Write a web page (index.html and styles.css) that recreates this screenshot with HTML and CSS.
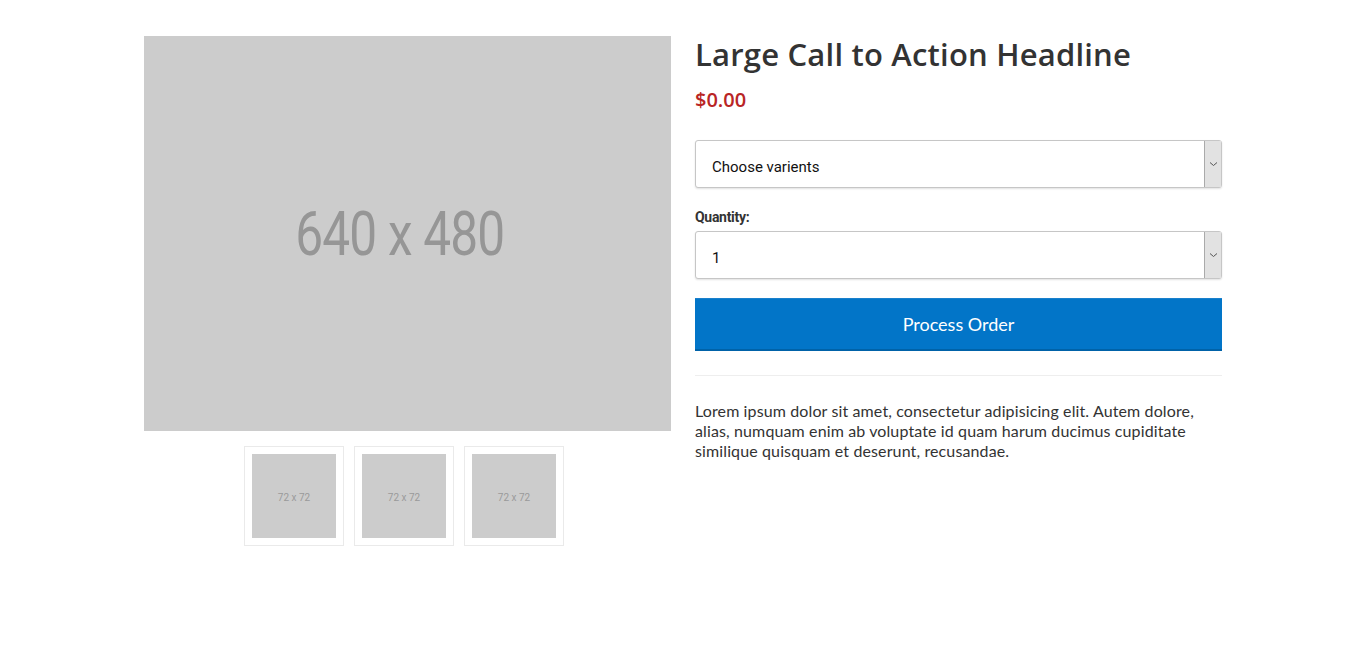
FILE: index.html
```html
<!DOCTYPE html>
<html lang="en">
<head>
<meta charset="utf-8">
<title>Product</title>
<link rel="stylesheet" href="styles.css">
</head>
<body>
<div class="product">
  <div class="gallery">
    <div class="main-image"><span>640 x 480</span></div>
    <div class="thumbs">
      <div class="thumb"><div class="thumb-img">72 x 72</div></div>
      <div class="thumb"><div class="thumb-img">72 x 72</div></div>
      <div class="thumb"><div class="thumb-img">72 x 72</div></div>
    </div>
  </div>
  <div class="details">
    <h1 class="title">Large Call to Action Headline</h1>
    <div class="price">$0.00</div>
    <div class="select variants">
      <span class="select-text">Choose varients</span>
      <span class="select-arrow"><svg width="9" height="6" viewBox="0 0 9 6"><path d="M1 1.5 L4.5 4.5 L8 1.5" fill="none" stroke="#555" stroke-width="1"/></svg></span>
    </div>
    <label class="qty-label">Quantity:</label>
    <div class="select qty">
      <span class="select-text">1</span>
      <span class="select-arrow"><svg width="9" height="6" viewBox="0 0 9 6"><path d="M1 1.5 L4.5 4.5 L8 1.5" fill="none" stroke="#555" stroke-width="1"/></svg></span>
    </div>
    <button class="order-btn">Process Order</button>
    <hr class="divider">
    <p class="description">Lorem ipsum dolor sit amet, consectetur adipisicing elit. Autem dolore, alias, numquam enim ab voluptate id quam harum ducimus cupiditate similique quisquam et deserunt, recusandae.</p>
  </div>
</div>
</body>
</html>
```
FILE: styles.css
```css
html, body { margin: 0; padding: 0; background: #fff; }
body { font-family: Lato, "Open Sans", sans-serif; color: #333; }

.product {
  width: 1078px;
  margin: 36px auto 0;
  display: grid;
  grid-template-columns: 527px 527px;
  column-gap: 24px;
  align-items: start;
}

.main-image {
  height: 395px;
  background: #cccccc;
  display: flex;
  align-items: center;
  justify-content: center;
}
.main-image span {
  font-family: Roboto, sans-serif;
  font-size: 62px;
  color: #969696;
  letter-spacing: -1px;
  transform: scaleX(0.8);
  display: inline-block;
  margin-left: -16px;
}

.thumbs {
  margin-top: 15px;
  display: flex;
  justify-content: center;
  gap: 10px;
  padding-right: 7px;
}
.thumb {
  width: 84px;
  height: 84px;
  padding: 7px;
  border: 1px solid #eaeaea;
}
.thumb-img {
  width: 84px;
  height: 84px;
  background: #cccccc;
  color: #9a9a9a;
  font-family: Roboto, sans-serif;
  font-size: 10px;
  display: flex;
  align-items: center;
  justify-content: center;
  padding-top: 3px;
  box-sizing: border-box;
}

.title {
  margin: 0;
  font-family: "Open Sans", sans-serif;
  font-weight: 600;
  font-size: 31px;
  line-height: 36px;
  color: #333;
  letter-spacing: 0.2px;
}
.price {
  margin-top: 16px;
  font-family: "Open Sans", sans-serif;
  font-weight: 600;
  font-size: 20px;
  line-height: 24px;
  color: #b92525;
}

.select {
  height: 46px;
  border: 1px solid #c6c6c6;
  border-radius: 3px;
  box-shadow: 0 1px 2px rgba(0,0,0,0.12);
  display: flex;
  align-items: stretch;
  background: #fff;
}
.variants { margin-top: 28px; }
.select-text {
  flex: 1;
  display: flex;
  align-items: center;
  padding-left: 16px;
  padding-top: 5px;
  font-family: Roboto, sans-serif;
  font-size: 15px;
  color: #111;
}
.select-arrow {
  width: 16px;
  background: #e2e2e2;
  border-left: 1px solid #aaa;
  display: flex;
  align-items: center;
  justify-content: center;
}

.qty-label {
  display: block;
  margin-top: 20px;
  margin-bottom: 5px;
  font-family: Roboto, sans-serif;
  font-weight: 700;
  font-size: 14px;
  line-height: 18px;
  color: #333;
  letter-spacing: -0.3px;
}

.order-btn {
  display: block;
  width: 100%;
  margin-top: 19px;
  height: 53px;
  border: none;
  border-top: 1px solid #1a80cc;
  border-bottom: 2px solid #0062a8;
  background: #0275c8;
  color: #fff;
  font-family: Lato, sans-serif;
  font-size: 18px;
  cursor: pointer;
}

.divider {
  margin: 24px 0 0;
  border: 0;
  border-top: 1px solid #eee;
}

.description {
  margin: 25px 0 0;
  font-size: 16px;
  line-height: 20px;
  color: #333;
  letter-spacing: 0.12px;
}
```
